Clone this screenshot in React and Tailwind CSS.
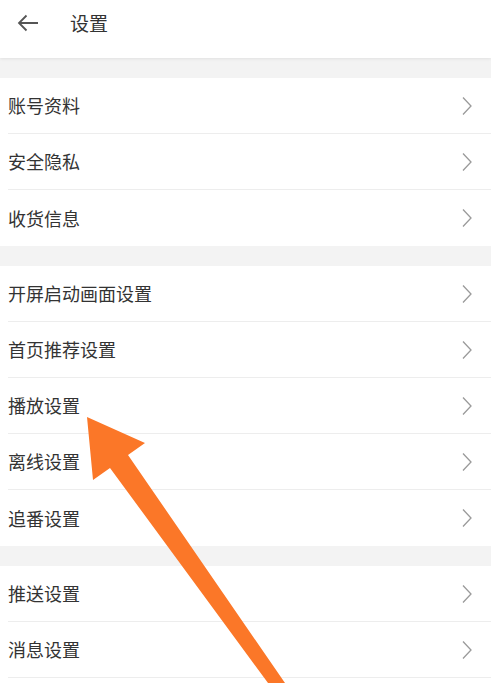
const sections = [
  { items: ["账号资料", "安全隐私", "收货信息"], tail: false },
  { items: ["开屏启动画面设置", "首页推荐设置", "播放设置", "离线设置", "追番设置"], tail: false },
  { items: ["推送设置", "消息设置"], tail: true },
];

function Chevron() {
  return (
    <svg width="12" height="20" viewBox="0 0 12 20" fill="none" className="shrink-0">
      <path d="M2 1.5 L10 10 L2 18.5" stroke="#9a9a9a" strokeWidth="1.3" strokeLinejoin="miter" />
    </svg>
  );
}

function Row({ label, divider }) {
  return (
    <div className="flex h-[56px] items-center pl-[8px]">
      <div className={"flex h-full flex-1 items-center justify-between pr-[18px] " + (divider ? "border-b border-[#ededed]" : "")}>
        <span className="text-[18px] text-[#333333]">{label}</span>
        <Chevron />
      </div>
    </div>
  );
}

export default function App() {
  return (
    <div
      className="relative h-[683px] w-[491px] overflow-hidden bg-white"
      style={{ fontFamily: '"Noto Sans CJK SC", "Noto Sans", sans-serif' }}
    >
      {/* Header */}
      <div className="relative z-10 flex h-[58px] items-center bg-white pb-[12px] shadow-[0_1px_3px_rgba(0,0,0,0.08)]">
        <svg width="22" height="18" viewBox="0 0 22 18" fill="none" className="ml-[17px]">
          <path d="M21 9 H2 M9.5 1.5 L2 9 L9.5 16.5" stroke="#555555" strokeWidth="1.8" />
        </svg>
        <span className="ml-[31px] text-[19px] text-[#333333]">设置</span>
      </div>

      {sections.map((s, si) => (
        <div key={si}>
          <div className="h-[20px] bg-[#f3f3f3]" />
          {s.items.map((label, i) => (
            <Row key={label} label={label} divider={i < s.items.length - 1 || s.tail} />
          ))}
        </div>
      ))}

      {/* Annotation arrow */}
      <svg className="pointer-events-none absolute left-0 top-0" width="491" height="683" viewBox="0 0 491 683">
        <polygon
          points="87,417 145,443 128,455 285,683 268,683 110,468 93,480"
          fill="#fb7728"
        />
      </svg>
    </div>
  );
}
